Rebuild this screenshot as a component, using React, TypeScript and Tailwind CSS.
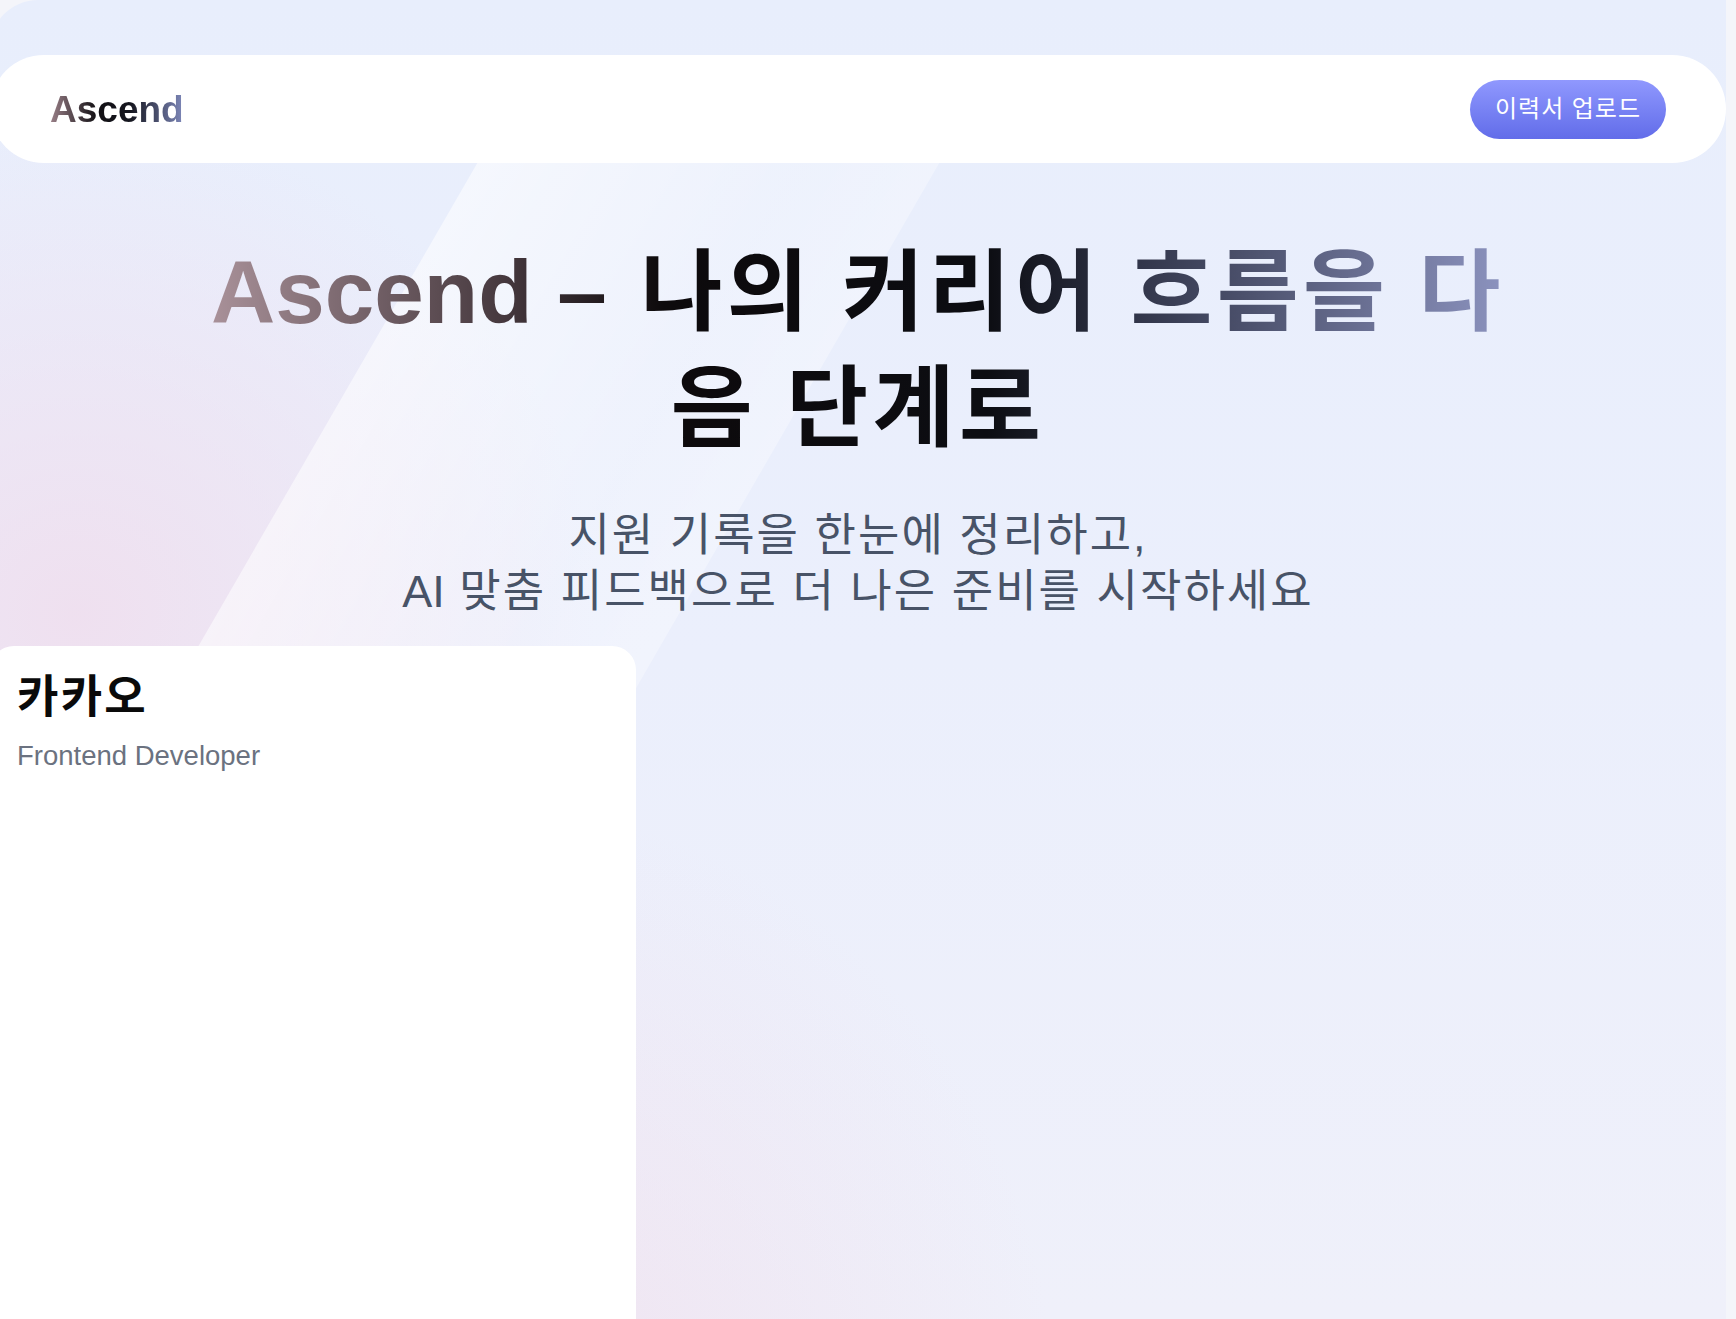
import React from 'react';

const font = "font-['Liberation_Sans','Noto_Sans_CJK_KR',sans-serif]";

function Header() {
  return (
    <header className="relative flex h-[108px] items-center justify-between rounded-full bg-white px-[60px]">
      <span className="bg-[linear-gradient(90deg,#9a8088_0%,#121014_35%,#15161f_60%,#7f89bb_100%)] bg-clip-text text-[37px] font-bold leading-none text-transparent">
        Ascend
      </span>
      <button className="h-[59px] w-[196px] rounded-full bg-gradient-to-b from-[#9098fe] to-[#626ce9] text-[24px] tracking-[0.04em] text-white">
        이력서 업로드
      </button>
    </header>
  );
}

function Hero() {
  return (
    <section className="relative mt-[72px] flex flex-col items-center text-center">
      <h1 className="inline-block bg-[linear-gradient(90deg,#a99199_0%,#3b2f34_25%,#0d0a0c_35%,#0c0d12_60%,#2c3043_70%,#8c93bf_100%)] bg-clip-text text-[89px] font-bold leading-[1.3] text-transparent">
        <span className="whitespace-nowrap">
          Ascend <span className="tracking-[0.05em]">– 나의 커리어 흐름을 다</span>
        </span>
        <br />
        <span className="whitespace-nowrap tracking-[0.05em]">음 단계로</span>
      </h1>
      <p className="mt-[42px] text-[45px] leading-[56px] tracking-[0.045em] text-[#485367]">
        지원 기록을 한눈에 정리하고,
        <br />
        <span className="tracking-normal">AI</span> 맞춤 피드백으로 더 나은 준비를 시작하세요
      </p>
    </section>
  );
}

function ApplicationCard() {
  return (
    <div className="relative mt-[26px] h-[1500px] w-[646px] rounded-[24px] bg-white px-[27px] pt-[20px]">
      <h3 className="text-[45px] font-bold leading-[1.4] tracking-[0.05em] text-[#0a0a0a]">카카오</h3>
      <p className="mt-[8px] text-[27.5px] leading-[1.4] text-[#6b7280]">Frontend Developer</p>
    </div>
  );
}

export default function App() {
  return (
    <div
      className={`h-screen overflow-x-hidden overflow-y-scroll bg-[#f4f5fa] ${font} [&::-webkit-scrollbar]:w-[10px] [&::-webkit-scrollbar-track]:bg-[#f7f7f7] [&::-webkit-scrollbar-thumb]:rounded-full [&::-webkit-scrollbar-thumb]:bg-[#8c8c8c]`}
    >
      <div className="relative -ml-[10px] w-[1736px] overflow-hidden rounded-tl-[48px] bg-[linear-gradient(180deg,#e8eefc_0%,#ebeffc_30%,#eff0fa_60%,#f0f0f9_100%)] pb-[45px] pt-[55px]">
        {/* background tints */}
        <div className="pointer-events-none absolute inset-0 bg-[radial-gradient(ellipse_40%_30%_at_5%_28%,rgba(240,220,236,0.8),transparent_75%)]"></div>
        <div className="pointer-events-none absolute inset-0 bg-[radial-gradient(ellipse_45%_40%_at_30%_65%,rgba(240,222,236,0.7),transparent_70%)]"></div>

        {/* light beam, starts under the header */}
        <div className="pointer-events-none absolute inset-x-0 bottom-0 top-[163px] overflow-hidden">
          <div className="absolute left-[240px] top-[-418px] h-[1800px] w-[400px] rotate-[30deg] bg-[linear-gradient(90deg,rgba(255,255,255,0.55),rgba(255,255,255,0.22)_70%,rgba(255,255,255,0.32))]"></div>
        </div>

        <Header />
        <Hero />
        <ApplicationCard />
      </div>
    </div>
  );
}
